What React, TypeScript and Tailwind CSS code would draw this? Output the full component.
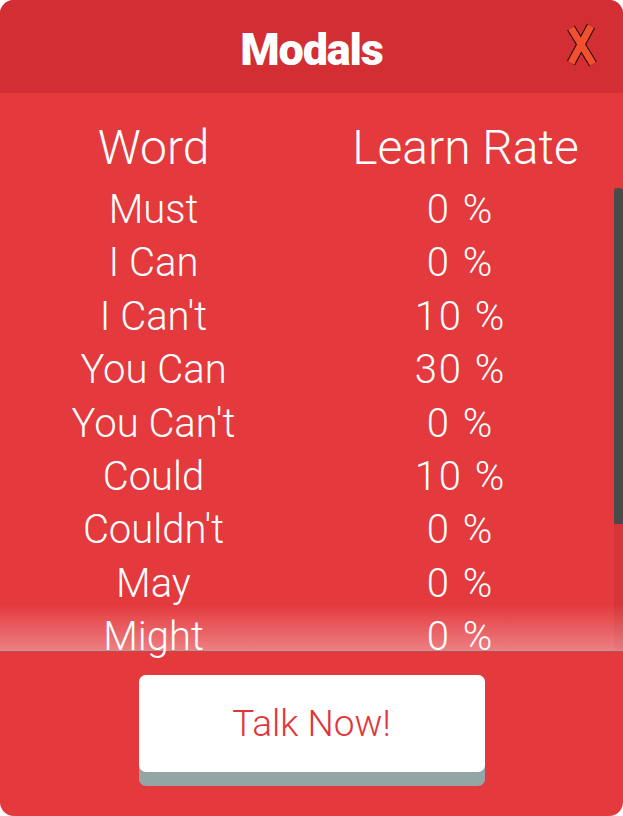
const rows = [
  { word: "Must", rate: 0 },
  { word: "I Can", rate: 0 },
  { word: "I Can't", rate: 10 },
  { word: "You Can", rate: 30 },
  { word: "You Can't", rate: 0 },
  { word: "Could", rate: 10 },
  { word: "Couldn't", rate: 0 },
  { word: "May", rate: 0 },
  { word: "Might", rate: 0 },
];

function CloseIcon() {
  return (
    <svg width="34" height="46" viewBox="0 0 34 46">
      <g strokeLinecap="butt">
        <line x1="7" y1="5" x2="29" y2="41" stroke="#1a0a08" strokeWidth="9" />
        <line x1="27" y1="3" x2="7" y2="40" stroke="#1a0a08" strokeWidth="9" />
        <line x1="7" y1="5" x2="29" y2="41" stroke="#f2502e" strokeWidth="7" />
        <line x1="27" y1="3" x2="7" y2="40" stroke="#f2502e" strokeWidth="7" />
      </g>
    </svg>
  );
}

function App() {
  return (
    <div className="w-[623px] h-[816px] bg-white" style={{ fontFamily: "Roboto, 'Open Sans', sans-serif" }}>
      <div className="h-full rounded-[14px] overflow-hidden bg-[#e4393d] flex flex-col">
        <div className="relative h-[93px] shrink-0 bg-[#d22e33] flex items-center justify-center">
          <h1 className="text-white text-[45px] font-black tracking-tight leading-none mt-[6px]">Modals</h1>
          <button type="button" className="absolute right-[25px] top-[23px]">
            <CloseIcon />
          </button>
        </div>

        <div className="relative h-[558px] shrink-0 flex border-b border-[#a8a0a0]">
          <div className="flex-1 text-white font-light text-center">
            <div className="grid grid-cols-2 pt-[28px] h-[90px] text-[48px] leading-[54px]">
              <span>Word</span>
              <span className="pl-[10px]">Learn Rate</span>
            </div>
            {rows.map((row) => (
              <div key={row.word} className="grid grid-cols-2 h-[53.4px] text-[40px] leading-[53.4px]">
                <span>{row.word}</span>
                <span className="tracking-[2px]">{row.rate} %</span>
              </div>
            ))}
          </div>
          <div className="w-[9px] shrink-0 flex flex-col">
            <div className="h-[95px]" />
            <div className="h-[336px] rounded-t-[3px] bg-[#4a4a4a]" />
            <div className="flex-1 bg-[#d83538]" />
          </div>
          <div className="absolute left-0 right-0 bottom-0 h-[46px] bg-gradient-to-b from-transparent to-white/35 pointer-events-none" />
        </div>

        <div className="flex-1 flex justify-center pt-[24px]">
          <button
            type="button"
            className="w-[346px] h-[111px] rounded-[7px] bg-[#94a5a5] flex flex-col justify-start"
          >
            <div className="w-full h-[97px] rounded-[7px] bg-white flex items-center justify-center text-[#e0363b] text-[37px] font-light">
              Talk Now!
            </div>
          </button>
        </div>
      </div>
    </div>
  );
}

export default App;
